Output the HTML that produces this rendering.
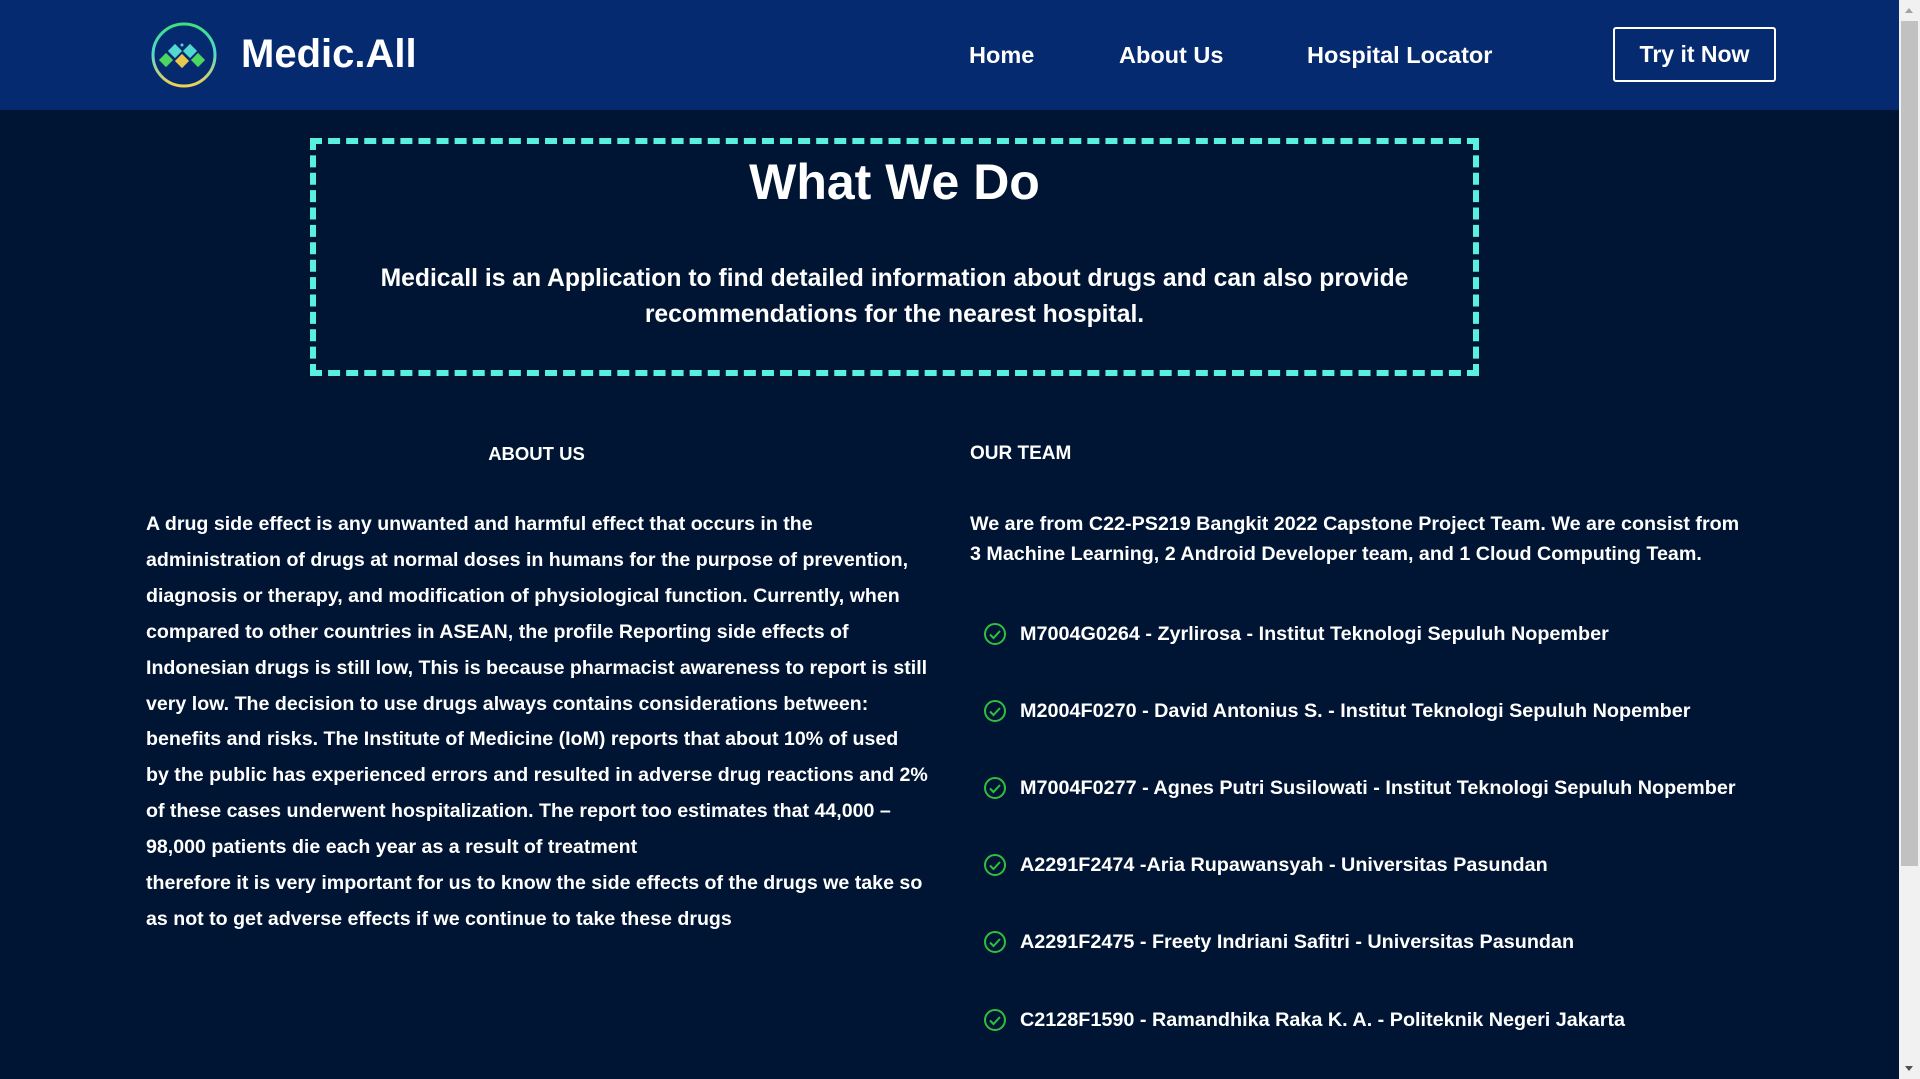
<!DOCTYPE html>
<html><head><meta charset="utf-8"><style>
*{margin:0;padding:0;box-sizing:border-box}
html,body{width:1920px;height:1079px;overflow:hidden;background:#001533;font-family:"Liberation Sans",sans-serif;font-weight:bold;color:#fff}
.hdr{position:absolute;left:0;top:0;width:1899px;height:110px;background:#062a70}
.abs{position:absolute;white-space:nowrap}
.nav{font-size:23.5px;top:42px}
.btn{position:absolute;left:1613px;top:27px;width:163px;height:55px;border:2px solid #fff;border-radius:3px;font-size:23px;display:flex;align-items:center;justify-content:center}
.sb{position:absolute;left:1899px;top:0;width:21px;height:1079px;background:#f1f1f1}
.thumb{position:absolute;left:2px;top:21px;width:17px;height:845px;background:#c1c1c1}
.box{position:absolute;left:310px;top:138px;width:1169px;height:238px;border:6px dashed #5af0e0}
.about{left:146px;font-size:19.6px;line-height:35.9px;top:507px}
.team{left:970px;font-size:19.7px;line-height:30px;top:509px}
.li{position:absolute;left:983px;font-size:19.8px;white-space:nowrap}
.li svg{position:absolute;left:0;top:1px}
.li span{position:absolute;left:37px;top:2px}
</style></head><body>
<div class="hdr">
<svg class="abs" style="left:148px;top:21px" width="72" height="68" viewBox="0 0 72 68">
<defs><linearGradient id="g" x1="0" y1="0" x2="0" y2="1"><stop offset="0" stop-color="#3fe07a"/><stop offset="0.45" stop-color="#4fd8d0"/><stop offset="1" stop-color="#f0d050"/></linearGradient></defs>
<circle cx="36" cy="34" r="31" fill="none" stroke="url(#g)" stroke-width="3"/>
<rect x="-5" y="-5" width="10" height="10" fill="#52d8d0" transform="translate(27 30) rotate(45)"/>
<rect x="-5" y="-5" width="10" height="10" fill="#52d8d0" transform="translate(42 30) rotate(45)"/>
<rect x="-5" y="-5" width="10" height="10" fill="#4cd860" transform="translate(18 39) rotate(45)"/>
<rect x="-5" y="-5" width="10" height="10" fill="#e8c84c" transform="translate(34 40) rotate(45)"/>
<rect x="-5" y="-5" width="10" height="10" fill="#4cd860" transform="translate(50 39) rotate(45)"/>
<circle cx="34" cy="24" r="1.5" fill="#52d8d0"/>
</svg>
<div class="abs" style="left:241px;top:32px;font-size:40px">Medic.All</div>
<div class="abs nav" style="left:969px">Home</div>
<div class="abs nav" style="left:1119px">About Us</div>
<div class="abs nav" style="left:1307px">Hospital Locator</div>
<div class="btn">Try it Now</div>
</div>
<div class="box"></div>
<div class="abs" style="left:0;width:1789px;text-align:center;top:153px;font-size:50px">What We Do</div>
<div class="abs" style="left:0;width:1789px;text-align:center;top:261px;font-size:24.7px;line-height:36px">Medicall is an Application to find detailed information about drugs and can also provide<br>recommendations for the nearest hospital.</div>
<div class="abs" style="left:0;width:1073px;text-align:center;top:443px;font-size:18.5px">ABOUT US</div>
<div class="abs" style="left:970px;top:443px;font-size:19px">OUR TEAM</div>
<div class="abs about">A drug side effect is any unwanted and harmful effect that occurs in the<br>administration of drugs at normal doses in humans for the purpose of prevention,<br>diagnosis or therapy, and modification of physiological function. Currently, when<br>compared to other countries in ASEAN, the profile Reporting side effects of<br>Indonesian drugs is still low, This is because pharmacist awareness to report is still<br>very low. The decision to use drugs always contains considerations between:<br>benefits and risks. The Institute of Medicine (IoM) reports that about 10% of used<br>by the public has experienced errors and resulted in adverse drug reactions and 2%<br>of these cases underwent hospitalization. The report too estimates that 44,000 –<br>98,000 patients die each year as a result of treatment<br>therefore it is very important for us to know the side effects of the drugs we take so<br>as not to get adverse effects if we continue to take these drugs</div>
<div class="abs team">We are from C22-PS219 Bangkit 2022 Capstone Project Team. We are consist from<br>3 Machine Learning, 2 Android Developer team, and 1 Cloud Computing Team.</div>
<div class="li" style="top:621px"><svg width="24" height="24" viewBox="0 0 24 24"><circle cx="12" cy="12" r="10" fill="none" stroke="#2fbf40" stroke-width="2"/><path d="M7 12.5l3.5 3.5 6.5-7" fill="none" stroke="#2fbf40" stroke-width="2"/></svg><span>M7004G0264 - Zyrlirosa - Institut Teknologi Sepuluh Nopember</span></div>
<div class="li" style="top:698px"><svg width="24" height="24" viewBox="0 0 24 24"><circle cx="12" cy="12" r="10" fill="none" stroke="#2fbf40" stroke-width="2"/><path d="M7 12.5l3.5 3.5 6.5-7" fill="none" stroke="#2fbf40" stroke-width="2"/></svg><span>M2004F0270 - David Antonius S. - Institut Teknologi Sepuluh Nopember</span></div>
<div class="li" style="top:775px"><svg width="24" height="24" viewBox="0 0 24 24"><circle cx="12" cy="12" r="10" fill="none" stroke="#2fbf40" stroke-width="2"/><path d="M7 12.5l3.5 3.5 6.5-7" fill="none" stroke="#2fbf40" stroke-width="2"/></svg><span>M7004F0277 - Agnes Putri Susilowati - Institut Teknologi Sepuluh Nopember</span></div>
<div class="li" style="top:852px"><svg width="24" height="24" viewBox="0 0 24 24"><circle cx="12" cy="12" r="10" fill="none" stroke="#2fbf40" stroke-width="2"/><path d="M7 12.5l3.5 3.5 6.5-7" fill="none" stroke="#2fbf40" stroke-width="2"/></svg><span>A2291F2474 -Aria Rupawansyah - Universitas Pasundan</span></div>
<div class="li" style="top:929px"><svg width="24" height="24" viewBox="0 0 24 24"><circle cx="12" cy="12" r="10" fill="none" stroke="#2fbf40" stroke-width="2"/><path d="M7 12.5l3.5 3.5 6.5-7" fill="none" stroke="#2fbf40" stroke-width="2"/></svg><span>A2291F2475 - Freety Indriani Safitri - Universitas Pasundan</span></div>
<div class="li" style="top:1007px"><svg width="24" height="24" viewBox="0 0 24 24"><circle cx="12" cy="12" r="10" fill="none" stroke="#2fbf40" stroke-width="2"/><path d="M7 12.5l3.5 3.5 6.5-7" fill="none" stroke="#2fbf40" stroke-width="2"/></svg><span>C2128F1590 - Ramandhika Raka K. A. - Politeknik Negeri Jakarta</span></div>
<div class="sb"><div class="thumb"></div>
<div style="position:absolute;left:6px;top:8px;width:0;height:0;border-left:4px solid transparent;border-right:4px solid transparent;border-bottom:5px solid #a3a3a3"></div>
<div style="position:absolute;left:6px;top:1066px;width:0;height:0;border-left:4px solid transparent;border-right:4px solid transparent;border-top:5px solid #505050"></div>
</div>
</body></html>
